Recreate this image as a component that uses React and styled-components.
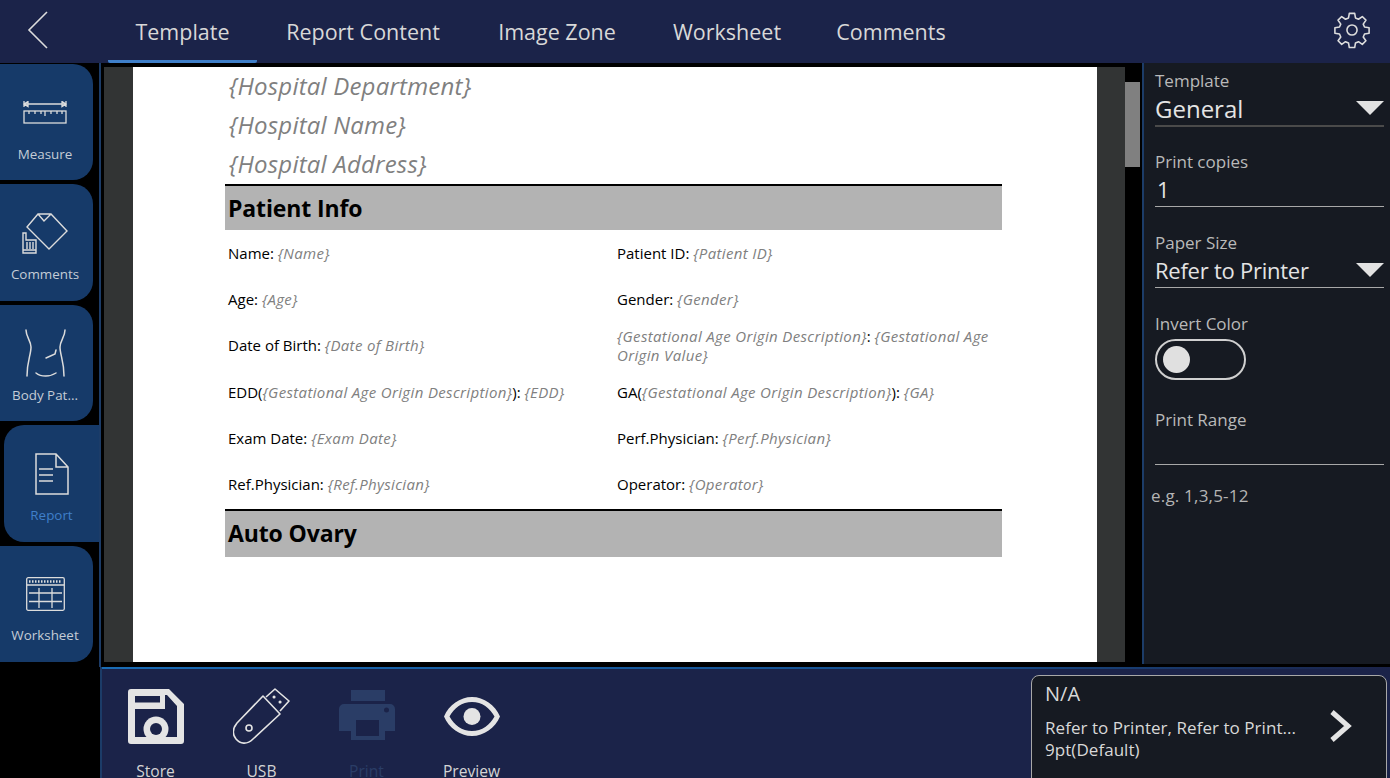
import React from 'react';
import styled, { createGlobalStyle } from 'styled-components';

const Global = createGlobalStyle`
  html, body { margin: 0; padding: 0; background: #000; }
  * { box-sizing: border-box; }
  body { font-family: "Open Sans", "Noto Sans", sans-serif; }
`;

const Screen = styled.div`
  width: 1390px;
  height: 778px;
  overflow: hidden;
  display: grid;
  grid-template-columns: 101px 1fr;
  grid-template-rows: 63px 604px 111px;
  background: #000;
`;

const TopBar = styled.header`
  grid-column: 1 / 3;
  background: #1b2349;
  display: flex;
  align-items: stretch;
  position: relative;
`;

const Back = styled.div`
  width: 108px;
  padding: 11px 0 0 27px;
  color: #dcdcdc;
`;

const Tabs = styled.nav`
  display: flex;
`;

const Tab = styled.div`
  width: ${p => p.$w}px;
  height: 63px;
  padding-top: 18px;
  text-align: center;
  font-size: 21.5px;
  line-height: 28px;
  color: #d8d8d8;
  white-space: nowrap;
  border-bottom: 3px solid ${p => (p.$active ? '#3f7fc9' : 'transparent')};
  border-radius: 0 0 2px 2px;
`;

const Gear = styled.div`
  position: absolute;
  right: 19px;
  top: 11px;
  color: #dcdcdc;
`;

const Rail = styled.aside`
  background: #000;
  border-right: 2px solid #1c3c68;
  padding: 1px 0 0;
  display: flex;
  flex-direction: column;
  gap: 4px;
`;

const RailButton = styled.div`
  width: ${p => (p.$active ? '95px' : '93px')};
  margin-left: ${p => (p.$active ? '4px' : '0')};
  height: 116.4px;
  background: #163a69;
  border-radius: ${p => (p.$active ? '20px 0 0 20px' : '0 20px 20px 0')};
  display: flex;
  flex-direction: column;
  align-items: center;
  justify-content: flex-end;
  padding: 0 ${p => (p.$active ? '0' : '3px')} 17.5px 0;
  color: #dcdcdc;
  svg { margin-bottom: ${p => p.$iconGap}px; display: block; }
`;

const RailLabel = styled.div`
  font-size: 13.4px;
  line-height: 18px;
  color: ${p => (p.$active ? '#3f7fc9' : '#c4ccd6')};
  white-space: nowrap;
`;

const Main = styled.main`
  display: grid;
  grid-template-columns: 1fr 248px;
  min-height: 0;
`;

const Viewer = styled.div`
  margin: 4px 2px 0 3px;
  background: #323434;
  display: flex;
  justify-content: flex-end;
  height: 595px;
`;

const Paper = styled.div`
  width: 964px;
  margin-right: 28px;
  background: #fff;
  padding: 0 95px 0 92px;
`;

const ScrollTrack = styled.div`
  width: 15px;
  background: #000;
  padding-top: 15px;
`;

const ScrollThumb = styled.div`
  height: 85px;
  background: #808080;
`;

const HospitalLine = styled.div`
  height: 39px;
  padding-left: 4px;
  font-size: 24px;
  letter-spacing: 0.2px;
  font-style: italic;
  line-height: 38px;
  color: #808080;
  white-space: nowrap;
`;

const SectionHead = styled.div`
  background: #b3b3b3;
  border-top: 2px solid #000;
  height: ${p => p.$h}px;
  padding-left: 3px;
  font-size: 23px;
  font-weight: 700;
  letter-spacing: -0.12px;
  line-height: 44px;
  color: #000;
`;

const InfoGrid = styled.div`
  display: grid;
  grid-template-columns: 389px 1fr;
  grid-auto-rows: 46.3px;
  padding-bottom: 1px;
`;

const Cell = styled.div`
  display: flex;
  align-items: center;
  padding: 0 3px;
  font-size: 15px;
  line-height: 19px;
  color: #000;
`;

const CellText = styled.div``;

const CellValue = styled.span`
  font-style: italic;
  color: #808080;
  letter-spacing: 0.35px;
`;

const Side = styled.aside`
  border-left: 2px solid #1c3c68;
  background: #161a22;
  padding: 6px 6px 0 11px;
  height: 601px;
`;

const FieldLabel = styled.div`
  font-size: 17px;
  line-height: 24px;
  color: #b9b9b9;
  margin-top: ${p => p.$top || 0}px;
`;

const FieldValue = styled.div`
  display: flex;
  align-items: center;
  justify-content: space-between;
  height: ${p => p.$h || 32}px;
  padding-bottom: 2px;
  font-size: ${p => p.$size || 22}px;
  letter-spacing: ${p => p.$track || 0}px;
  color: #e4e4e4;
  border-bottom: ${p => (p.$thick ? '2px solid #4a4a4a' : '1px solid #a8a8a8')};
  padding-left: ${p => p.$pad || 0}px;
`;

const Caret = styled.div`
  width: 0;
  height: 0;
  border-left: 14px solid transparent;
  border-right: 14px solid transparent;
  border-top: 14px solid #e2e2e2;
`;

const Toggle = styled.div`
  width: 91px;
  height: 41px;
  margin-top: 3px;
  border: 2px solid #d0d0d0;
  border-radius: 21px;
  padding: 5px 0 0 6px;
`;

const Knob = styled.div`
  width: 27px;
  height: 27px;
  border-radius: 50%;
  background: #e0e0e0;
`;

const Hint = styled.div`
  margin: 20px 0 0 -4px;
  font-size: 17px;
  letter-spacing: 0.2px;
  line-height: 22px;
  color: #b4b4b4;
`;

const BottomBar = styled.footer`
  grid-column: 2;
  margin-left: -1px;
  background: linear-gradient(90deg, #1a6cb5, #16508f 65%, #1b2349) top / 100% 2px no-repeat, #1b2349;
  border-left: 2px solid #1c3c68;
  display: flex;
  justify-content: space-between;
  padding: 8px 3px 0 0;
  overflow: hidden;
`;

const Actions = styled.div`
  display: flex;
  padding-top: 10px;
`;

const Action = styled.div`
  width: ${p => p.$w}px;
  display: flex;
  flex-direction: column;
  align-items: center;
  color: ${p => (p.$off ? '#2a3d66' : '#e4e4e4')};
`;

const IconSlot = styled.div`
  flex: none;
  height: 62px;
  display: flex;
  align-items: center;
  justify-content: center;
`;

const ActionLabel = styled.div`
  flex: none;
  margin-top: 14px;
  font-size: 15.6px;
  line-height: 20px;
  white-space: nowrap;
  color: ${p => (p.$off ? '#2a3d66' : '#d4d4d4')};
`;

const InfoCard = styled.div`
  flex: none;
  width: 356px;
  height: 120px;
  background: #161a22;
  border: 1px solid #a8a8a8;
  border-radius: 8px;
  padding: 6px 13px;
  position: relative;
  color: #d8d8d8;
`;

const CardTitle = styled.div`
  font-size: 20px;
  line-height: 24px;
  margin-bottom: 11px;
`;

const CardLine = styled.div`
  font-size: 17px;
  letter-spacing: 0.05px;
  line-height: 22px;
  white-space: nowrap;
`;

const CardArrow = styled.div`
  position: absolute;
  left: 296px;
  top: 33px;
  color: #e4e4e4;
`;

const tabs = [
  { name: 'Template', w: 149, active: true },
  { name: 'Report Content', w: 212 },
  { name: 'Image Zone', w: 176 },
  { name: 'Worksheet', w: 164 },
  { name: 'Comments', w: 164 },
];

const MeasureIcon = () => (
  <svg width="44" height="23" viewBox="0 0 44 23" fill="none" stroke="currentColor" strokeWidth="1.3">
    <path d="M1 0v6M43 0v6M1 3h42M1 3l4-2.500v5zM43 3l-4-2.500v5z" />
    <rect x="1" y="10" width="42" height="12" />
    <path d="M6 10v3M12 10v3M18 10v3M22 10v5M28 10v3M34 10v3M39 10v3" />
  </svg>
);

const CommentsIcon = () => (
  <svg width="46" height="41" viewBox="0 0 46 41" fill="none" stroke="currentColor" strokeWidth="1.4">
    <path d="M16 1h13l16 17-18 18L5 14zM16 1l6 7 7-7" />
    <path d="M1 40V20h3v7h10v13z" fill="#163a69" />
    <path d="M5 29v7M8 29v7M11 29v7M1 37h13" />
  </svg>
);

const BodyIcon = () => (
  <svg width="41" height="48" viewBox="0 0 41 48" fill="none" stroke="currentColor" strokeWidth="1.5" strokeLinecap="round">
    <path d="M1 1c0 7 5 11 5 17 0 8-4 14-4 29" />
    <path d="M40 1c0 7-5 11-5 17 0 8 4 14 4 29" />
    <path d="M31 21l-1 4-9 4" />
    <path d="M11 44c5 4 14 4 20 0" />
  </svg>
);

const ReportIcon = () => (
  <svg width="34" height="42" viewBox="0 0 34 42" fill="none" stroke="currentColor" strokeWidth="1.5">
    <path d="M1 1h20l12 13v27H1zM21 1v13h12" />
    <path d="M4 16h14M4 22h14M4 28h14" />
  </svg>
);

const WorksheetIcon = () => (
  <svg width="39" height="34" viewBox="0 0 39 34" fill="none" stroke="currentColor" strokeWidth="1.3">
    <rect x="0.700" y="0.700" width="37.600" height="32.600" rx="1.500" />
    <path d="M3 4.500h33" strokeDasharray="1.500 1.500" strokeWidth="2.500" />
    <path d="M1 8h37M3 16h33M3 24.500h33M13 11v20M26 11v20" />
  </svg>
);

const SaveIcon = () => (
  <svg width="56" height="55" viewBox="0 0 56 55">
    <path
      fill="currentColor"
      fillRule="evenodd"
      d="M3 0h38l15 15v37a3 3 0 0 1-3 3H3a3 3 0 0 1-3-3V3a3 3 0 0 1 3-3zM7 7v6.500h25V7zM7 20v28h42V17L39 6h-2v14z"
    />
    <circle cx="28" cy="40" r="12.500" fill="currentColor" />
    <circle cx="28" cy="40" r="6" fill="#1b2349" />
    <path d="M14 48h28v2H14z" fill="currentColor" />
  </svg>
);

const UsbIcon = () => (
  <svg width="58" height="56" viewBox="0 0 58 56" fill="none" stroke="currentColor" strokeWidth="1.600" strokeLinejoin="round">
    <path d="M30 8l17 18-27 25c-6 6-13 5-17 0s-3-11 1-16z" />
    <path d="M33 9L42 1l14 12-9 10" />
    <circle cx="16" cy="40" r="3" />
    <path d="M41 9h.1M47 14h.1" strokeWidth="3" strokeLinecap="round" />
  </svg>
);

const PrintIcon = () => (
  <svg width="56" height="52" viewBox="0 0 56 52">
    <path
      fill="currentColor"
      fillRule="evenodd"
      d="M12 0h34v11H12zM5 14h46a5 5 0 0 1 5 5v22H46v9H12v-9H0V19a5 5 0 0 1 5-5zM17 30v16h23V30zM45 20a2.500 2.500 0 1 0 5 0 2.500 2.500 0 0 0-5 0z"
    />
  </svg>
);

const EyeIcon = () => (
  <svg width="56" height="39" viewBox="0 0 56 39">
    <path
      fill="currentColor"
      fillRule="evenodd"
      d="M28 0c12 0 23 8 28 19.500C51 31 40 39 28 39S5 31 0 19.500C5 8 16 0 28 0zm0 5C18 5 10 11 5.500 19.500 10 28 18 34 28 34s18-6 22.500-14.500C46 11 38 5 28 5z"
    />
    <circle cx="28" cy="19.500" r="8.500" fill="currentColor" />
  </svg>
);

const railItems = [
  { label: 'Measure', icon: <MeasureIcon />, gap: 21 },
  { label: 'Comments', icon: <CommentsIcon />, gap: 11 },
  { label: 'Body Pat...', icon: <BodyIcon />, gap: 9 },
  { label: 'Report', icon: <ReportIcon />, gap: 11, active: true },
  { label: 'Worksheet', icon: <WorksheetIcon />, gap: 15 },
];

const rows = [
  [['Name: ', '{Name}'], ['Patient ID: ', '{Patient ID}']],
  [['Age: ', '{Age}'], ['Gender: ', '{Gender}']],
  [['Date of Birth: ', '{Date of Birth}'], ['', '{Gestational Age Origin Description}', ': ', '{Gestational Age Origin Value}']],
  [['EDD(', '{Gestational Age Origin Description}', '): ', '{EDD}'], ['GA(', '{Gestational Age Origin Description}', '): ', '{GA}']],
  [['Exam Date: ', '{Exam Date}'], ['Perf.Physician: ', '{Perf.Physician}']],
  [['Ref.Physician: ', '{Ref.Physician}'], ['Operator: ', '{Operator}']],
];

export default function App() {
  return (
    <>
      <Global />
      <Screen>
        <TopBar>
          <Back>
            <svg width="22" height="38" viewBox="0 0 22 38" fill="none" stroke="currentColor" strokeWidth="1.6">
              <path d="M20 1L2 19l18 18" />
            </svg>
          </Back>
          <Tabs>
            {tabs.map(t => (
              <Tab key={t.name} $w={t.w} $active={t.active}>{t.name}</Tab>
            ))}
          </Tabs>
          <Gear>
            <svg width="38" height="38" viewBox="0 0 24 24" fill="none" stroke="currentColor" strokeWidth="1" strokeLinejoin="round">
              <circle cx="12" cy="12" r="3.200" />
              <path d="M10.300 1.500h3.400l.5 2.900 1.900.8 2.400-1.700 2.300 2.300-1.700 2.500.8 1.800 2.900.5v3.400l-2.900.5-.8 1.900 1.700 2.400-2.300 2.300-2.400-1.700-1.900.8-.5 2.900h-3.400l-.5-2.900-1.900-.8-2.400 1.700-2.300-2.300 1.700-2.400-.8-1.900-2.900-.5v-3.400l2.900-.5.8-1.800-1.700-2.500 2.300-2.300 2.400 1.700 1.900-.8z" />
            </svg>
          </Gear>
        </TopBar>

        <Rail>
          {railItems.map(item => (
            <RailButton key={item.label} $active={item.active} $iconGap={item.gap}>
              {item.icon}
              <RailLabel $active={item.active}>{item.label}</RailLabel>
            </RailButton>
          ))}
        </Rail>

        <Main>
          <Viewer>
            <Paper>
              <HospitalLine>{'{Hospital Department}'}</HospitalLine>
              <HospitalLine>{'{Hospital Name}'}</HospitalLine>
              <HospitalLine>{'{Hospital Address}'}</HospitalLine>
              <SectionHead $h={46}>Patient Info</SectionHead>
              <InfoGrid>
                {rows.flat().map((parts, i) => (
                  <Cell key={i}>
                    <CellText>
                      {parts.map((part, j) =>
                        j % 2 === 0 ? <span key={j}>{part}</span> : <CellValue key={j}>{part}</CellValue>
                      )}
                    </CellText>
                  </Cell>
                ))}
              </InfoGrid>
              <SectionHead $h={48}>Auto Ovary</SectionHead>
            </Paper>
            <ScrollTrack><ScrollThumb /></ScrollTrack>
          </Viewer>

          <Side>
            <FieldLabel>Template</FieldLabel>
            <FieldValue $thick $h={34} $size={24}><span>General</span><Caret /></FieldValue>
            <FieldLabel $top={23}>Print copies</FieldLabel>
            <FieldValue $pad={2} $h={33}>1</FieldValue>
            <FieldLabel $top={24}>Paper Size</FieldLabel>
            <FieldValue $track={-0.25} $h={33}><span>Refer to Printer</span><Caret /></FieldValue>
            <FieldLabel $top={24}>Invert Color</FieldLabel>
            <Toggle><Knob /></Toggle>
            <FieldLabel $top={28}>Print Range</FieldLabel>
            <FieldValue $h={33} />
            <Hint>e.g. 1,3,5-12</Hint>
          </Side>
        </Main>

        <BottomBar>
          <Actions>
            <Action $w={107}><IconSlot><SaveIcon /></IconSlot><ActionLabel>Store</ActionLabel></Action>
            <Action $w={105}><IconSlot><UsbIcon /></IconSlot><ActionLabel>USB</ActionLabel></Action>
            <Action $w={105} $off><IconSlot><PrintIcon /></IconSlot><ActionLabel $off>Print</ActionLabel></Action>
            <Action $w={105}><IconSlot><EyeIcon /></IconSlot><ActionLabel>Preview</ActionLabel></Action>
          </Actions>
          <InfoCard>
            <CardTitle>N/A</CardTitle>
            <CardLine>Refer to Printer, Refer to Print...</CardLine>
            <CardLine>9pt(Default)</CardLine>
            <CardArrow>
              <svg width="26" height="34" viewBox="0 0 26 34" fill="none" stroke="currentColor" strokeWidth="5">
                <path d="M4 3l16 14L4 31" />
              </svg>
            </CardArrow>
          </InfoCard>
        </BottomBar>
      </Screen>
    </>
  );
}
